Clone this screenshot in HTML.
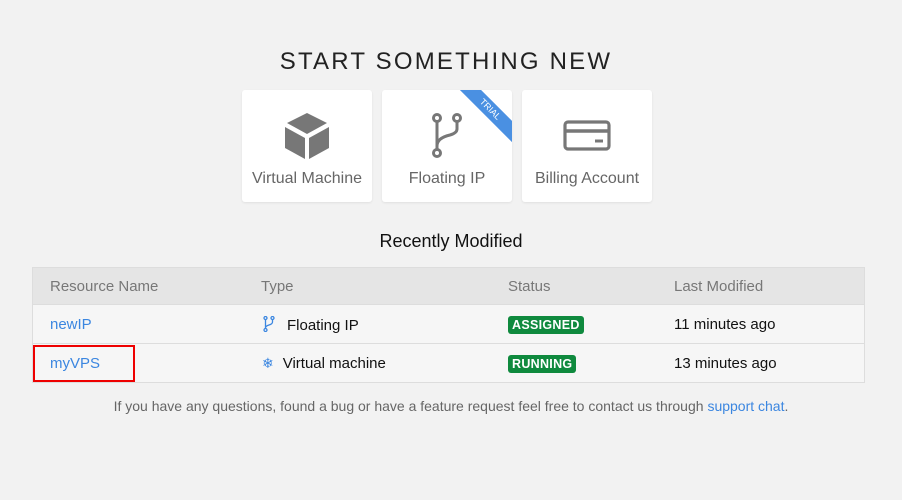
<!DOCTYPE html>
<html><head><style>
body{margin:0;width:902px;height:500px;background:#f2f2f2;font-family:"Liberation Sans",sans-serif;position:relative;overflow:hidden}
.t{position:absolute;left:-5px;width:902px;text-align:center;top:48px;font-size:24px;letter-spacing:2.2px;color:#222;font-weight:300}
.card{position:absolute;top:90px;width:130px;height:112px;background:#fff;border-radius:3px;box-shadow:0 1px 2px rgba(0,0,0,.08);overflow:hidden}
.card .l{position:absolute;top:80px;left:0;width:100%;text-align:center;font-size:16px;color:#666}
.card svg{position:absolute;left:40px;top:20px}
.rm{position:absolute;top:231px;width:902px;text-align:center;font-size:18px;color:#111}
.tb{position:absolute;left:32px;top:267px;width:831px;border:1px solid #ddd;background:#f6f6f6}
.r{position:relative;height:38px;border-top:1px solid #ddd;font-size:15px;color:#111}
.r.h{height:36px;border:0;background:#e5e5e5;color:#777}
.r>span{position:absolute;top:11px}
.r.h>span{top:10px}
.b{background:#0f8a3e;color:#fff;font-size:12.5px;font-weight:bold;padding:2px 4px;border-radius:3px;letter-spacing:.3px}
a{color:#3b86e0;text-decoration:none}
.f{position:absolute;top:398px;width:902px;text-align:center;font-size:14px;color:#666}
</style></head><body>
<div class="t">START SOMETHING NEW</div>
<div class="card" style="left:242px">
<svg width="50" height="50" viewBox="0 0 50 50" style="left:40px;top:20px"><path d="M25 3 L45 13 L25 24 L5 13Z" fill="#777"/><path d="M3 17 L23 28 L23 49 L3 38Z" fill="#777"/><path d="M47 17 L27 28 L27 49 L47 38Z" fill="#777"/></svg>
<div class="l">Virtual Machine</div></div>
<div class="card" style="left:382px">
<svg width="50" height="50" viewBox="0 0 50 50" fill="none" stroke="#777" stroke-width="3"><circle cx="15" cy="8" r="3.5"/><circle cx="35" cy="8" r="3.5"/><circle cx="15" cy="43" r="3.5"/><path d="M15 12 V39 M35 12 V19 Q35 23 28 25 Q15 28 15 36"/></svg>
<div style="position:absolute;right:-28px;top:12px;width:100px;transform:rotate(45deg);background:#4a90e2;color:#fff;font-size:9px;text-align:center;line-height:15px">TRIAL</div>
<div class="l">Floating IP</div></div>
<div class="card" style="left:522px">
<svg width="52" height="50" viewBox="0 0 52 50" fill="none" stroke="#777" stroke-width="3.2"><rect x="3" y="12" width="44" height="27" rx="3"/><path d="M3 21 H47" stroke-width="3.5"/><path d="M33 31 H41" stroke-width="3"/></svg>
<div class="l">Billing Account</div></div>
<div class="rm">Recently Modified</div>
<div class="tb">
<div class="r h"><span style="left:17px">Resource Name</span><span style="left:228px">Type</span><span style="left:475px">Status</span><span style="left:641px">Last Modified</span></div>
<div class="r"><span style="left:17px"><a>newIP</a></span><span style="left:230px"><svg width="12" height="16" viewBox="0 0 12 16" fill="none" stroke="#3b86e0" stroke-width="1.3" style="vertical-align:-2px;margin-right:12px"><circle cx="2.5" cy="2" r="1.5"/><circle cx="9.5" cy="2" r="1.5"/><circle cx="2.5" cy="14" r="1.5"/><path d="M2.5 3.5 V12.5 M9.5 3.5 V6 Q9.5 8 6 9 Q2.5 10 2.5 12"/></svg>Floating IP</span><span style="left:475px"><span class="b">ASSIGNED</span></span><span style="left:641px">11 minutes ago</span></div>
<div class="r"><span style="left:17px"><a>myVPS</a></span><span style="left:229px"><span style="color:#3b86e0;font-size:14px;margin-right:9px">❄</span>Virtual machine</span><span style="left:475px"><span class="b">RUNNING</span></span><span style="left:641px">13 minutes ago</span></div>
</div>
<div style="position:absolute;left:33px;top:345px;width:98px;height:33px;border:2px solid #e00"></div>
<div class="f">If you have any questions, found a bug or have a feature request feel free to contact us through <a>support chat</a>.</div>
</body></html>
